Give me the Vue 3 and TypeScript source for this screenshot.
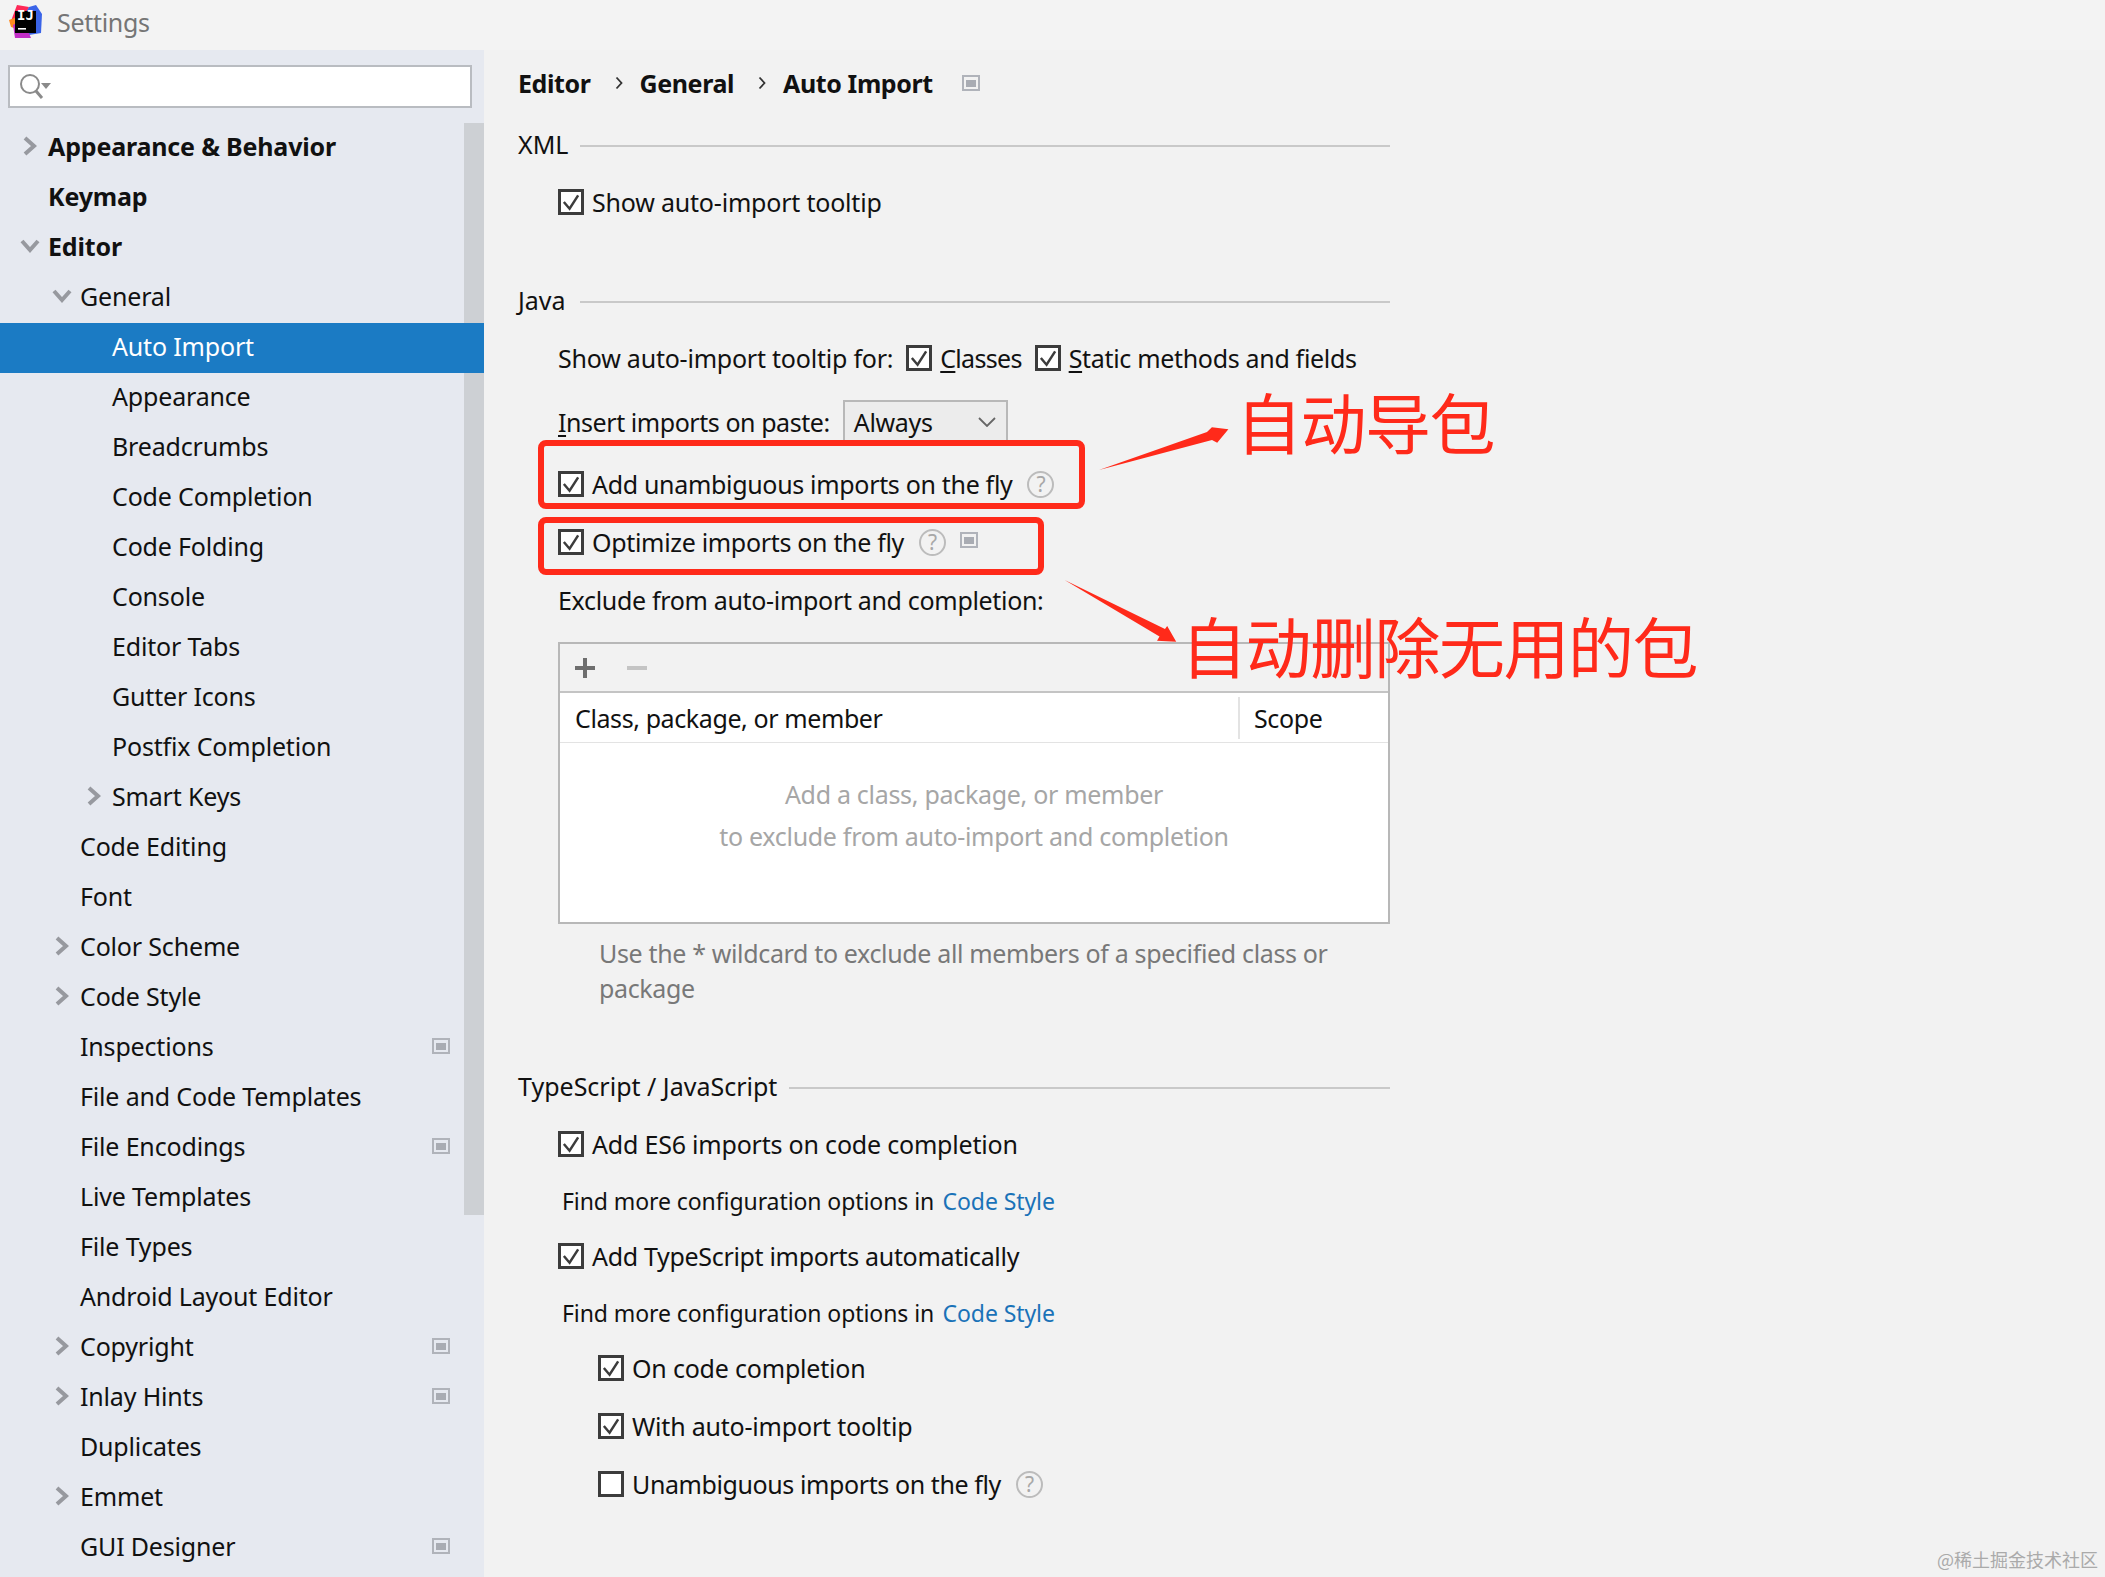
<script setup lang="ts">
interface TreeRow {
  label: string
  level: number
  arrow?: 'right' | 'down'
  bold?: boolean
  active?: boolean
  badge?: boolean
}

const tree: TreeRow[] = [
  { label: 'Appearance & Behavior', level: 0, arrow: 'right', bold: true },
  { label: 'Keymap', level: 0, bold: true },
  { label: 'Editor', level: 0, arrow: 'down', bold: true },
  { label: 'General', level: 1, arrow: 'down' },
  { label: 'Auto Import', level: 2, active: true },
  { label: 'Appearance', level: 2 },
  { label: 'Breadcrumbs', level: 2 },
  { label: 'Code Completion', level: 2 },
  { label: 'Code Folding', level: 2 },
  { label: 'Console', level: 2 },
  { label: 'Editor Tabs', level: 2 },
  { label: 'Gutter Icons', level: 2 },
  { label: 'Postfix Completion', level: 2 },
  { label: 'Smart Keys', level: 2, arrow: 'right' },
  { label: 'Code Editing', level: 1 },
  { label: 'Font', level: 1 },
  { label: 'Color Scheme', level: 1, arrow: 'right' },
  { label: 'Code Style', level: 1, arrow: 'right' },
  { label: 'Inspections', level: 1, badge: true },
  { label: 'File and Code Templates', level: 1 },
  { label: 'File Encodings', level: 1, badge: true },
  { label: 'Live Templates', level: 1 },
  { label: 'File Types', level: 1 },
  { label: 'Android Layout Editor', level: 1 },
  { label: 'Copyright', level: 1, arrow: 'right', badge: true },
  { label: 'Inlay Hints', level: 1, arrow: 'right', badge: true },
  { label: 'Duplicates', level: 1 },
  { label: 'Emmet', level: 1, arrow: 'right' },
  { label: 'GUI Designer', level: 1, badge: true },
]

function rowIndent(level: number) {
  return { paddingLeft: `${16 + level * 32}px` }
}
</script>

<template>
  <div class="window">
    <header class="titlebar">
      <svg class="logo" viewBox="0 0 34 34" width="34" height="34">
        <polygon points="8,0 20,2 14,16 2,16" fill="#fe2857" />
        <polygon points="0,15 8,12 8,24 2,22" fill="#ff8a1f" />
        <polygon points="20,2 27,0 33,9 32,28 20,30 12,16" fill="#3a64e8" />
        <polygon points="4,20 14,14 22,33 6,33" fill="#c22ec6" />
        <rect x="6" y="6" width="21" height="22" fill="#000" />
        <rect x="9" y="23" width="8" height="1.6" fill="#fff" />
      </svg>
      <span class="logo-text">IJ</span>
      <span class="title">Settings</span>
    </header>

    <div class="body">
      <aside class="sidebar">
        <div class="search">
          <svg width="34" height="28" viewBox="0 0 34 28">
            <circle cx="12" cy="11" r="9" fill="none" stroke="#8a8a8a" stroke-width="2" />
            <line x1="18" y1="18" x2="24" y2="25" stroke="#8a8a8a" stroke-width="3" />
            <polygon points="23,10 33,10 28,16" fill="#8a8a8a" />
          </svg>
        </div>
        <div class="scrollbar" />
        <div class="tree">
          <div
            v-for="row in tree"
            :key="row.label"
            class="tree-row"
            :class="{ 'tree-row--bold': row.bold, 'tree-row--active': row.active }"
            :style="rowIndent(row.level)"
          >
            <span class="arrow">
              <svg v-if="row.arrow === 'right'" width="14" height="20" viewBox="0 0 14 20">
                <polyline points="2,2 11,10 2,18" fill="none" stroke="#97999f" stroke-width="4" />
              </svg>
              <svg v-else-if="row.arrow === 'down'" width="20" height="14" viewBox="0 0 20 14">
                <polyline points="2,2 10,11 18,2" fill="none" stroke="#97999f" stroke-width="4" />
              </svg>
            </span>
            <span>{{ row.label }}</span>
            <svg v-if="row.badge" class="badge tree-badge" width="18" height="16" viewBox="0 0 18 16">
              <rect x="1" y="1" width="16" height="14" fill="none" stroke="#b0b3ba" stroke-width="2" />
              <rect x="4" y="5" width="10" height="7" fill="#a9acb3" />
            </svg>
          </div>
        </div>
      </aside>

      <main class="panel">
        <nav class="crumbs">
          <span>Editor</span>
          <svg class="crumb-sep" width="8" height="14" viewBox="0 0 8 14">
            <polyline points="1.5,1.5 6.5,7 1.5,12.5" fill="none" stroke="#333" stroke-width="1.8" />
          </svg>
          <span>General</span>
          <svg class="crumb-sep" width="8" height="14" viewBox="0 0 8 14">
            <polyline points="1.5,1.5 6.5,7 1.5,12.5" fill="none" stroke="#333" stroke-width="1.8" />
          </svg>
          <span>Auto Import</span>
          <svg class="badge crumb-badge" width="18" height="16" viewBox="0 0 18 16">
            <rect x="1" y="1" width="16" height="14" fill="none" stroke="#b0b3ba" stroke-width="2" />
            <rect x="4" y="5" width="10" height="7" fill="#a9acb3" />
          </svg>
        </nav>

        <div class="section m23"><span class="section-name">XML</span><i class="rule" /></div>
        <label class="row indent m22">
          <span class="check"><svg width="21" height="21" viewBox="0 0 21 21"><polyline points="3,10 9,17 18,3" fill="none" stroke="#3c3c3c" stroke-width="2.6" /></svg></span>
          <span class="loose">Show auto-import tooltip</span>
        </label>

        <div class="section m62"><span class="section-name">Java</span><i class="rule" /></div>
        <div class="row indent m22">
          <span class="for-label">Show auto-import tooltip for:</span>
          <span class="check"><svg width="21" height="21" viewBox="0 0 21 21"><polyline points="3,10 9,17 18,3" fill="none" stroke="#3c3c3c" stroke-width="2.6" /></svg></span>
          <span class="for-classes"><u>C</u>lasses</span>
          <span class="check"><svg width="21" height="21" viewBox="0 0 21 21"><polyline points="3,10 9,17 18,3" fill="none" stroke="#3c3c3c" stroke-width="2.6" /></svg></span>
          <span><u>S</u>tatic methods and fields</span>
        </div>

        <div class="row indent combo-row m24">
          <span class="combo-label"><u>I</u>nsert imports on paste:</span>
          <div class="combo">
            <span>Always</span>
            <svg width="18" height="10" viewBox="0 0 18 10"><polyline points="1,1 9,9 17,1" fill="none" stroke="#666" stroke-width="1.8" /></svg>
          </div>
        </div>

        <div class="row indent m22">
          <span class="check"><svg width="21" height="21" viewBox="0 0 21 21"><polyline points="3,10 9,17 18,3" fill="none" stroke="#3c3c3c" stroke-width="2.6" /></svg></span>
          <span>Add unambiguous imports on the fly</span>
          <span class="help">?</span>
        </div>
        <div class="row indent m22">
          <span class="check"><svg width="21" height="21" viewBox="0 0 21 21"><polyline points="3,10 9,17 18,3" fill="none" stroke="#3c3c3c" stroke-width="2.6" /></svg></span>
          <span>Optimize imports on the fly</span>
          <span class="help">?</span>
          <svg class="badge row-badge" width="18" height="16" viewBox="0 0 18 16">
            <rect x="1" y="1" width="16" height="14" fill="none" stroke="#b0b3ba" stroke-width="2" />
            <rect x="4" y="5" width="10" height="7" fill="#a9acb3" />
          </svg>
        </div>
        <div class="row indent m22">Exclude from auto-import and completion:</div>

        <div class="table">
          <div class="table-tools">
            <svg width="20" height="20" viewBox="0 0 20 20"><path d="M0 10h20M10 0v20" stroke="#6e6e6e" stroke-width="4" /></svg>
            <svg width="20" height="20" viewBox="0 0 20 20"><path d="M0 10h20" stroke="#c4c4c4" stroke-width="4" /></svg>
          </div>
          <div class="table-head">
            <span class="col-name">Class, package, or member</span>
            <span class="col-scope">Scope</span>
          </div>
          <div class="table-empty">
            <p>Add a class, package, or member</p>
            <p>to exclude from auto-import and completion</p>
          </div>
        </div>
        <p class="hint">Use the * wildcard to exclude all members of a specified class or package</p>

        <div class="section m62"><span class="section-name">TypeScript / JavaScript</span><i class="rule" /></div>
        <div class="row indent m22">
          <span class="check"><svg width="21" height="21" viewBox="0 0 21 21"><polyline points="3,10 9,17 18,3" fill="none" stroke="#3c3c3c" stroke-width="2.6" /></svg></span>
          <span class="loose">Add ES6 imports on code completion</span>
        </div>
        <div class="row more m21"><span>Find more configuration options in <a class="link">Code Style</a></span></div>
        <div class="row indent m19">
          <span class="check"><svg width="21" height="21" viewBox="0 0 21 21"><polyline points="3,10 9,17 18,3" fill="none" stroke="#3c3c3c" stroke-width="2.6" /></svg></span>
          <span>Add TypeScript imports automatically</span>
        </div>
        <div class="row more m21"><span>Find more configuration options in <a class="link">Code Style</a></span></div>
        <div class="row indent2 m19">
          <span class="check"><svg width="21" height="21" viewBox="0 0 21 21"><polyline points="3,10 9,17 18,3" fill="none" stroke="#3c3c3c" stroke-width="2.6" /></svg></span>
          <span class="loose">On code completion</span>
        </div>
        <div class="row indent2 m22">
          <span class="check"><svg width="21" height="21" viewBox="0 0 21 21"><polyline points="3,10 9,17 18,3" fill="none" stroke="#3c3c3c" stroke-width="2.6" /></svg></span>
          <span class="loose">With auto-import tooltip</span>
        </div>
        <div class="row indent2 m22">
          <span class="check" />
          <span class="tight">Unambiguous imports on the fly</span>
          <span class="help">?</span>
        </div>
      </main>
    </div>

    <svg class="marks" width="2105" height="1577" viewBox="0 0 2105 1577">
      <rect x="541" y="443" width="541" height="63" rx="5" fill="none" stroke="#ff2a1a" stroke-width="6" />
      <rect x="541" y="520" width="500" height="52" rx="5" fill="none" stroke="#ff2a1a" stroke-width="6" />
      <polygon points="1099,470 1207,432 1211.9,427.3 1228.4,429.3 1217.2,442.7 1212,440" fill="#ff2a1a" />
      <polygon points="1064.6,580 1165,629 1167.2,626 1176.2,641.7 1157,640.7 1159.5,636.5" fill="#ff2a1a" />
    </svg>
    <div class="note note-a">自动导包</div>
    <div class="note note-b">自动删除无用的包</div>
    <div class="watermark">@稀土掘金技术社区</div>
  </div>
</template>

<style>
html, body {
  margin: 0;
  background: #f2f2f2;
}
</style>

<style scoped>
.window {
  position: relative;
  display: flex;
  flex-direction: column;
  width: 2105px;
  height: 1577px;
  overflow: hidden;
  background: #f2f2f2;
  color: #111;
  font-family: "Noto Sans", "Open Sans", sans-serif;
  font-size: 25px;
}

.titlebar {
  display: flex;
  align-items: center;
  flex: none;
  height: 50px;
  padding-left: 9px;
  background: #f3f3f3;
}

.logo {
  flex: none;
  margin-bottom: 6px;
}

.logo-text {
  position: absolute;
  left: 17px;
  top: 5px;
  color: #fff;
  font-family: "DejaVu Sans Mono", monospace;
  font-size: 14px;
  font-weight: 700;
  line-height: 20px;
}

.title {
  margin: 0 0 6px 14px;
  color: #757575;
  letter-spacing: -0.3px;
}

.body {
  display: flex;
  flex: 1;
  min-height: 0;
}

.sidebar {
  position: relative;
  flex: none;
  width: 484px;
  background: #e6e9f0;
  letter-spacing: -0.17px;
}

.search {
  display: flex;
  align-items: center;
  box-sizing: border-box;
  width: 464px;
  height: 43px;
  margin: 15px 0 15px 8px;
  padding-left: 8px;
  border: 2px solid #b9bcc1;
  background: #fff;
}

.scrollbar {
  position: absolute;
  top: 73px;
  right: 0;
  width: 20px;
  height: 1092px;
  background: #cdd0d4;
}

.tree {
  position: relative;
}

.tree-row {
  display: flex;
  align-items: center;
  box-sizing: border-box;
  height: 50px;
  padding-bottom: 5px;
  white-space: nowrap;
}

.tree-row--bold {
  font-weight: 700;
}

.tree-row--active {
  background: #1b7bc4;
  color: #fff;
}

.arrow {
  display: flex;
  align-items: center;
  justify-content: center;
  flex: none;
  width: 32px;
  padding-right: 5px;
  box-sizing: border-box;
}

.badge {
  flex: none;
}

.tree-badge {
  margin-left: auto;
  margin-right: 34px;
}

.panel {
  display: flex;
  flex-direction: column;
  flex: 1;
  min-width: 0;
  padding: 13px 0 0 34px;
  letter-spacing: -0.32px;
}

.crumbs {
  display: flex;
  align-items: center;
  height: 40px;
  font-weight: 700;
  letter-spacing: -0.4px;
}

.crumb-sep {
  margin: 0 17px 0 24px;
}

.crumb-badge {
  margin-left: 29px;
}

.section {
  display: flex;
  align-items: center;
  flex: none;
  width: 872px;
  height: 36px;
  letter-spacing: 0;
}

.section-name {
  min-width: 50px;
}

.rule {
  flex: 1;
  height: 2px;
  margin: 4px 0 0 12px;
  background: #c9c9c9;
}

.row {
  display: flex;
  align-items: center;
  flex: none;
  height: 36px;
  margin-top: 20px;
  white-space: nowrap;
}

.indent {
  padding-left: 40px;
}

.indent2 {
  padding-left: 80px;
}

.more {
  padding-left: 44px;
  font-size: 23px;
  letter-spacing: -0.08px;
}

.loose {
  letter-spacing: -0.2px;
}

.tight {
  letter-spacing: -0.4px;
}

.m19 { margin-top: 19px; }
.m21 { margin-top: 21px; }
.m22 { margin-top: 22px; }
.m23 { margin-top: 23px; }
.m24 { margin-top: 24px; }
.m62 { margin-top: 62px; }

.check {
  display: flex;
  align-items: center;
  justify-content: center;
  flex: none;
  box-sizing: border-box;
  width: 26px;
  height: 26px;
  margin-right: 8px;
  border: 3px solid #3c3c3c;
  background: #fff;
}

.for-label {
  margin-right: 13px;
  letter-spacing: -0.22px;
}

.for-classes {
  margin-right: 13px;
  letter-spacing: -0.7px;
}

u {
  text-underline-offset: 3px;
}

.combo-row {
  height: 44px;
}

.combo-label {
  margin-right: 13px;
  letter-spacing: -0.44px;
}

.combo {
  display: flex;
  align-items: center;
  justify-content: space-between;
  box-sizing: border-box;
  width: 165px;
  height: 44px;
  padding: 0 10px 0 9px;
  border: 2px solid #b8b8b8;
  background: #ececec;
}

.help {
  display: flex;
  align-items: center;
  justify-content: center;
  box-sizing: border-box;
  width: 27px;
  height: 27px;
  margin-left: 15px;
  border: 2px solid #bcbcbc;
  border-radius: 50%;
  color: #a8a8a8;
  font-size: 21px;
}

.row-badge {
  margin-left: 14px;
  margin-bottom: 4px;
}

.table {
  display: flex;
  flex-direction: column;
  flex: none;
  box-sizing: border-box;
  width: 832px;
  height: 282px;
  margin: 24px 0 0 40px;
  border: 2px solid #b8b8b8;
}

.table-tools {
  display: flex;
  align-items: center;
  gap: 32px;
  flex: none;
  box-sizing: border-box;
  height: 49px;
  padding: 0 0 0 15px;
  border-bottom: 2px solid #c4c4c4;
}

.table-head {
  display: flex;
  align-items: center;
  flex: none;
  height: 50px;
  box-sizing: border-box;
  border-bottom: 1px solid #e3e3e3;
  background: #fff;
  letter-spacing: -0.4px;
}

.col-name {
  flex: 1;
  padding-left: 15px;
}

.col-scope {
  align-self: center;
  box-sizing: border-box;
  width: 150px;
  padding-left: 14px;
  border-left: 2px solid #e3e3e3;
  line-height: 42px;
}

.table-empty {
  flex: 1;
  padding-top: 30px;
  background: #fff;
  color: #a6a6a6;
  text-align: center;
  letter-spacing: -0.3px;
}

.table-empty p {
  margin: 0;
  line-height: 42px;
}

.hint {
  flex: none;
  box-sizing: border-box;
  width: 800px;
  margin: 12px 0 0 81px;
  color: #787878;
  line-height: 35px;
  letter-spacing: -0.35px;
}

.link {
  margin-left: 2.5px;
  color: #1a72b8;
}

.marks {
  position: absolute;
  inset: 0;
  pointer-events: none;
}

.note {
  position: absolute;
  color: #ff2a1a;
  font-family: "Noto Sans CJK SC", sans-serif;
  font-size: 66px;
  letter-spacing: -1.5px;
  line-height: 66px;
  white-space: nowrap;
}

.note-a {
  left: 1236px;
  top: 387px;
}

.note-b {
  left: 1181px;
  top: 611px;
}

.watermark {
  position: absolute;
  right: 7px;
  bottom: 5px;
  color: #aaa;
  font-family: "Noto Sans CJK SC", sans-serif;
  font-size: 18px;
}
</style>
